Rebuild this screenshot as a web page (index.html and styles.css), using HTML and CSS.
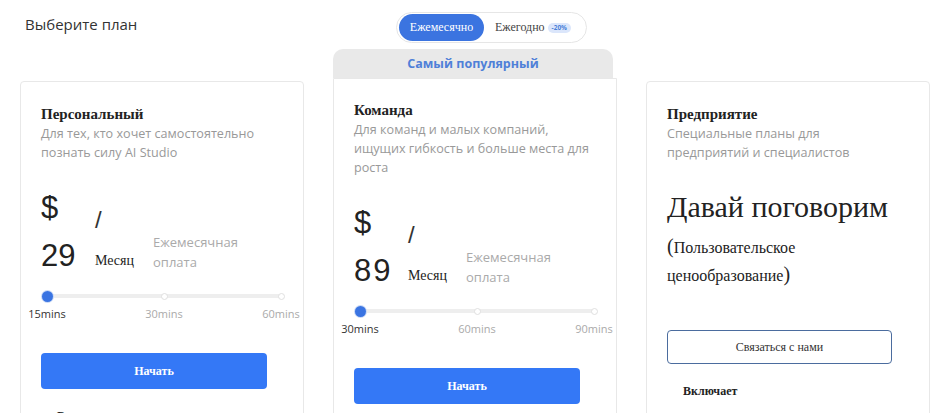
FILE: index.html
```html
<!DOCTYPE html>
<html lang="ru">
<head>
<meta charset="utf-8">
<title>Выберите план</title>
<link rel="stylesheet" href="styles.css">
</head>
<body>
<div class="top">
  <h1 class="page-title">Выберите план</h1>
  <div class="toggle">
    <span class="toggle-opt active">Ежемесячно</span>
    <span class="toggle-opt">Ежегодно</span>
    <span class="badge">-20%</span>
  </div>
</div>

<div class="plans">
  <div class="plan-col">
    <div class="card">
      <h2 class="plan-name">Персональный</h2>
      <p class="plan-desc">Для тех, кто хочет самостоятельно познать силу AI Studio</p>
      <div class="price">
        <div class="amount"><span>$</span><span>29</span></div>
        <div class="per"><span class="slash">/</span><span class="unit">Месяц</span></div>
        <div class="note">Ежемесячная<br>оплата</div>
      </div>
      <div class="slider">
        <div class="track">
          <span class="stop"><span class="dot on"></span></span>
          <span class="stop"><span class="dot"></span></span>
          <span class="stop"><span class="dot"></span></span>
        </div>
        <div class="labels">
          <span class="label cur">15mins</span>
          <span class="label">30mins</span>
          <span class="label">60mins</span>
        </div>
      </div>
      <button class="btn">Начать</button>
      <div class="includes">Включает</div>
    </div>
  </div>

  <div class="plan-col">
    <div class="popular">Самый популярный</div>
    <div class="card featured">
      <h2 class="plan-name">Команда</h2>
      <p class="plan-desc">Для команд и малых компаний, ищущих гибкость и больше места для роста</p>
      <div class="price">
        <div class="amount"><span>$</span><span class="wide">89</span></div>
        <div class="per"><span class="slash">/</span><span class="unit">Месяц</span></div>
        <div class="note">Ежемесячная<br>оплата</div>
      </div>
      <div class="slider">
        <div class="track">
          <span class="stop"><span class="dot on"></span></span>
          <span class="stop"><span class="dot"></span></span>
          <span class="stop"><span class="dot"></span></span>
        </div>
        <div class="labels">
          <span class="label cur">30mins</span>
          <span class="label">60mins</span>
          <span class="label">90mins</span>
        </div>
      </div>
      <button class="btn">Начать</button>
    </div>
  </div>

  <div class="plan-col">
    <div class="card">
      <h2 class="plan-name">Предприятие</h2>
      <p class="plan-desc narrow">Специальные планы для предприятий и специалистов</p>
      <div class="talk">Давай поговорим</div>
      <div class="custom"><span class="paren">(</span>Пользовательское<br>ценообразование<span class="paren">)</span></div>
      <button class="btn-outline">Связаться с нами</button>
      <div class="includes">Включает</div>
    </div>
  </div>
</div>
</body>
</html>
```

FILE: styles.css
```css
html, body {
  margin: 0;
  padding: 0;
  overflow: hidden;
  background: #ffffff;
}

body {
  font-family: "Open Sans", "Noto Sans", sans-serif;
  color: #333;
}

.top {
  display: grid;
  grid-template-columns: 284px 284px 284px;
  column-gap: 29px;
  padding-left: 20px;
  height: 49px;
}

.page-title {
  margin: 14px 0 0 5px;
  font-size: 15px;
  line-height: 20px;
  font-weight: 400;
  color: #333;
}

.toggle {
  justify-self: start;
  margin: 12px 0 0 63px;
  box-sizing: border-box;
  height: 31px;
  width: 191px;
  border: 1px solid #e6e6e6;
  border-radius: 16px;
  padding: 1px 2px;
  display: flex;
  align-items: center;
  font-family: "Liberation Serif", "DejaVu Serif", serif;
  font-size: 12px;
}

.toggle-opt {
  color: #444;
}

.toggle-opt.active {
  width: 85px;
  height: 27px;
  border-radius: 14px;
  background: #3b74e0;
  color: #fff;
  display: flex;
  align-items: center;
  justify-content: center;
  margin-right: 11px;
}

.badge {
  margin-left: 3px;
  background: #dbe6fb;
  color: #4a7fd8;
  font-family: "Open Sans", sans-serif;
  font-size: 6.5px;
  font-weight: 700;
  line-height: 10px;
  padding: 0 4px;
  border-radius: 5px;
}

.plans {
  display: grid;
  grid-template-columns: 284px 284px 284px;
  column-gap: 29px;
  padding-left: 20px;
  align-items: start;
}

.plan-col {
  display: flex;
  flex-direction: column;
}

.popular {
  height: 29px;
  background: #e9e9e9;
  border-radius: 10px 10px 0 0;
  margin-right: 4px;
  text-align: center;
  line-height: 29px;
  font-size: 12.5px;
  font-weight: 700;
  color: #4f80d8;
}

.card {
  box-sizing: border-box;
  margin-top: 32px;
  height: 420px;
  border: 1px solid #e8e8e8;
  border-radius: 4px;
  padding: 22px 20px 0 20px;
  background: #fff;
}

.card.featured {
  margin-top: 0;
  border-top-left-radius: 0;
  border-top-right-radius: 0;
  padding-top: 21px;
}

.plan-name {
  margin: 0;
  font-family: "Liberation Serif", "DejaVu Serif", serif;
  font-size: 15px;
  line-height: 20px;
  font-weight: 700;
  color: #222;
}

.plan-desc {
  margin: 0;
  font-size: 12.6px;
  line-height: 19px;
  color: #999;
}

.plan-desc.narrow {
  max-width: 200px;
}

.price {
  display: flex;
  margin-top: 22px;
}

.amount {
  width: 54px;
  display: flex;
  flex-direction: column;
  font-family: "Liberation Sans", Arial, sans-serif;
  font-size: 31px;
  line-height: 48px;
  color: #222;
}

.amount .wide {
  letter-spacing: 2px;
}

.per {
  width: 58px;
  display: flex;
  flex-direction: column;
}

.slash {
  margin-top: 24px;
  font-family: "Liberation Sans", Arial, sans-serif;
  font-size: 24px;
  line-height: 24px;
  color: #333;
}

.unit {
  margin-top: 19px;
  font-family: "Liberation Serif", serif;
  font-size: 14px;
  line-height: 20px;
  color: #222;
}

.note {
  padding-top: 48px;
  font-size: 13px;
  line-height: 20px;
  color: #aaa;
}

.slider {
  margin-top: 10px;
}

.track {
  width: 246px;
  height: 12px;
  margin: 0 auto;
  display: flex;
  justify-content: space-between;
  align-items: center;
  background: linear-gradient(#eeeeee, #eeeeee) center / 234px 4px no-repeat;
}

.stop {
  width: 12px;
  display: flex;
  justify-content: center;
}

.dot {
  box-sizing: border-box;
  width: 7px;
  height: 7px;
  border-radius: 50%;
  background: #fff;
  border: 1px solid #e0e0e0;
}

.dot.on {
  width: 11px;
  height: 11px;
  border: none;
  background: #3a74e2;
  box-shadow: 0 0 0 1px #c9d9f6;
}

.labels {
  width: 246px;
  margin: 4px auto 0;
  display: flex;
  justify-content: space-between;
}

.label {
  width: 12px;
  display: flex;
  justify-content: center;
  white-space: nowrap;
  font-size: 11px;
  line-height: 16px;
  color: #aaa;
}

.label.cur {
  color: #333;
}

.btn {
  display: block;
  margin-top: 31px;
  width: 226px;
  height: 36px;
  border: none;
  border-radius: 4px;
  background: #3478f6;
  color: #fff;
  font-family: "Liberation Serif", serif;
  font-size: 12px;
  font-weight: 700;
}

.talk {
  margin-top: 25px;
  font-family: "Liberation Serif", serif;
  font-size: 30px;
  line-height: 40px;
  color: #222;
}

.custom {
  margin-top: 6px;
  font-family: "Liberation Serif", serif;
  font-size: 16px;
  line-height: 27px;
  color: #222;
}

.paren {
  font-size: 20px;
}

.btn-outline {
  display: block;
  margin-top: 41px;
  width: 225px;
  height: 34px;
  border: 1px solid #4b6c9e;
  border-radius: 4px;
  background: #fff;
  color: #333;
  font-family: "Liberation Serif", serif;
  font-size: 12px;
}

.includes {
  margin-top: 19px;
  padding-left: 16px;
  font-family: "Liberation Serif", serif;
  font-size: 12px;
  font-weight: 700;
  line-height: 16px;
  color: #222;
}
```
